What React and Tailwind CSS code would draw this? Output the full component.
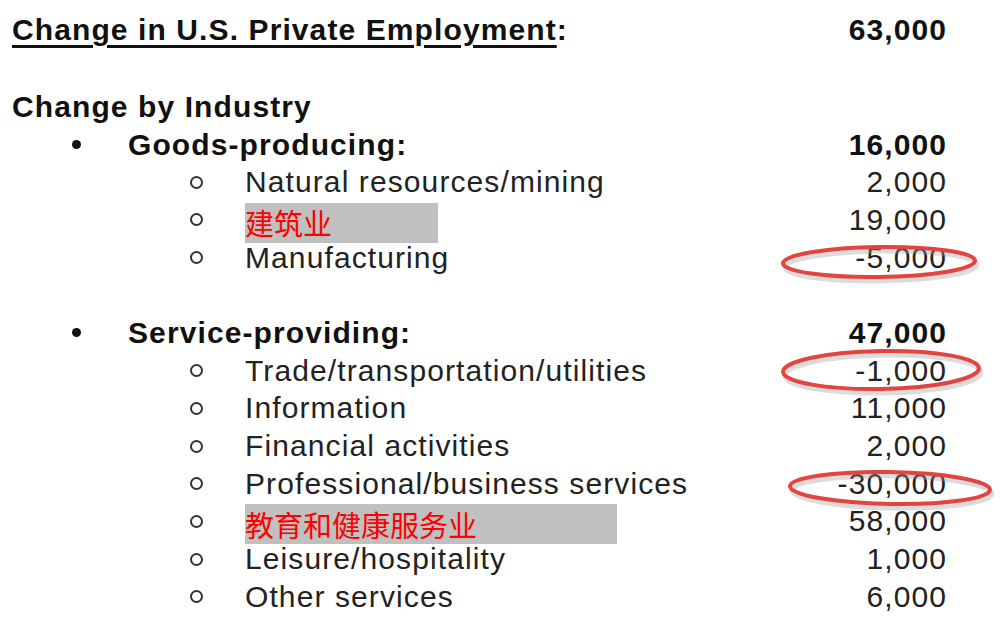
const goods = [
  { label: 'Natural resources/mining', value: '2,000' },
  { label: '建筑业', value: '19,000', masked: 'w-[193px]' },
  { label: 'Manufacturing', value: '-5,000', ring: 'a' },
]

const services = [
  { label: 'Trade/transportation/utilities', value: '-1,000', ring: 'b' },
  { label: 'Information', value: '11,000' },
  { label: 'Financial activities', value: '2,000' },
  { label: 'Professional/business services', value: '-30,000', ring: 'c' },
  { label: '教育和健康服务业', value: '58,000', masked: 'w-[372px]' },
  { label: 'Leisure/hospitality', value: '1,000' },
  { label: 'Other services', value: '6,000' },
]

function Ring({ kind }) {
  // hand-drawn red circles around the negative numbers
  if (kind === 'a') {
    return (
      <svg className="absolute left-[759px] top-[2px] w-[214px] h-[44px]" viewBox="0 0 214 44">
        <ellipse cx="108" cy="22" rx="96" ry="15" fill="none" stroke="#9a9a9a" strokeOpacity="0.35" strokeWidth="5" transform="translate(2 3) rotate(-0.8 108 22)" />
        <ellipse cx="108" cy="21" rx="96" ry="15" fill="none" stroke="#e2453f" strokeWidth="4" transform="rotate(-0.8 108 21)" />
      </svg>
    )
  }
  if (kind === 'b') {
    return (
      <svg className="absolute left-[759px] top-[-7px] w-[218px] h-[52px]" viewBox="0 0 218 52">
        <ellipse cx="110" cy="26" rx="98" ry="19" fill="none" stroke="#9a9a9a" strokeOpacity="0.35" strokeWidth="5" transform="translate(2 3) rotate(-1 110 26)" />
        <ellipse cx="110" cy="25" rx="98" ry="19" fill="none" stroke="#e2453f" strokeWidth="4" transform="rotate(-1 110 25)" />
      </svg>
    )
  }
  return (
    <svg className="absolute left-[766px] top-[2px] w-[222px] h-[46px]" viewBox="0 0 222 46">
      <ellipse cx="112" cy="22" rx="100" ry="16" fill="none" stroke="#9a9a9a" strokeOpacity="0.35" strokeWidth="5" transform="translate(2 3) rotate(1 112 22)" />
      <ellipse cx="112" cy="21" rx="100" ry="16" fill="none" stroke="#e2453f" strokeWidth="4" transform="rotate(1 112 21)" />
    </svg>
  )
}

function SubRow({ item }) {
  return (
    <div className="relative flex items-center h-[37.7px]">
      <span className="ml-[178px] w-[13px] h-[13px] rounded-full border-2 border-[#333] shrink-0" />
      {item.masked ? (
        <span className={`ml-[42px] ${item.masked} h-[40px] mt-[6px] bg-[#c0c0c0] flex items-center text-[29px] leading-none tracking-normal text-[#ff0000] font-['Noto_Sans_CJK_SC',serif]`}>
          {item.label}
        </span>
      ) : (
        <span className="ml-[42px] text-[30px] text-[#222]">{item.label}</span>
      )}
      <span className="ml-auto -mr-[1px] text-[30px] text-[#222]">{item.value}</span>
      {item.ring && <Ring kind={item.ring} />}
    </div>
  )
}

function GroupRow({ label, value }) {
  return (
    <div className="flex items-center h-[37.7px]">
      <span className="ml-[60px] w-[9px] h-[9px] rounded-full bg-[#111] shrink-0" />
      <span className="ml-[47px] text-[30px] font-bold text-[#111]">{label}</span>
      <span className="ml-auto -mr-[1px] text-[30px] font-bold text-[#111]">{value}</span>
    </div>
  )
}

export default function App() {
  return (
    <div className="w-[1002px] h-[618px] bg-white overflow-hidden pt-[11px] pl-[12px] pr-[56px] font-['Liberation_Sans',Arial,sans-serif] leading-none tracking-[1.1px]">
      {/* Header */}
      <div className="flex items-center h-[38px]">
        <span className="text-[30px] font-bold text-[#111]">
          <span className="underline decoration-[3px] underline-offset-[5px]">Change in U.S. Private Employment</span>:
        </span>
        <span className="ml-auto -mr-[1px] text-[30px] font-bold text-[#111]">63,000</span>
      </div>

      <div className="mt-[39px]">
        <div className="flex items-center h-[37.7px] text-[30px] font-bold text-[#111]">Change by Industry</div>

        <GroupRow label="Goods-producing:" value="16,000" />
        {goods.map((item) => (
          <SubRow key={item.label} item={item} />
        ))}

        <div className="h-[37.7px]" />

        <GroupRow label="Service-providing:" value="47,000" />
        {services.map((item) => (
          <SubRow key={item.label} item={item} />
        ))}
      </div>
    </div>
  )
}
